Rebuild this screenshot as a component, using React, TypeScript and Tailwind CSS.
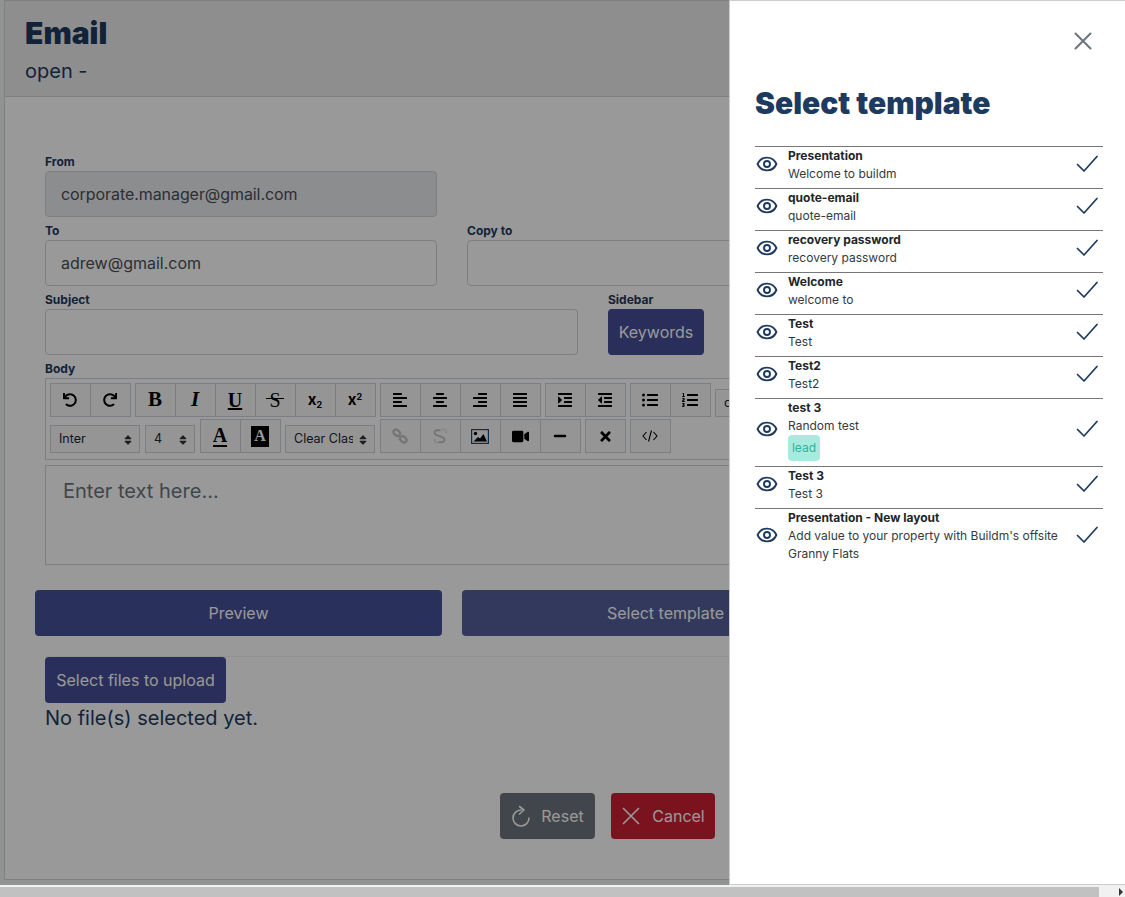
import type { ReactNode } from "react";
import {
  FaUndo,
  FaRedo,
  FaAlignLeft,
  FaAlignCenter,
  FaAlignRight,
  FaAlignJustify,
  FaIndent,
  FaOutdent,
  FaListUl,
  FaListOl,
  FaVideo,
  FaMinus,
  FaTimes,
  FaSort,
} from "react-icons/fa";

const templates = [
  { title: "Presentation", text: "Welcome to buildm" },
  { title: "quote-email", text: "quote-email" },
  { title: "recovery password", text: "recovery password" },
  { title: "Welcome", text: "welcome to" },
  { title: "Test", text: "Test" },
  { title: "Test2", text: "Test2" },
  { title: "test 3", text: "Random test", tag: "lead" },
  { title: "Test 3", text: "Test 3" },
  { title: "Presentation - New layout", text: "Add value to your property with Buildm's offsite Granny Flats" },
];

function Label({ children }: { children: ReactNode }) {
  return <div className="h-[23px] pt-[5px] text-[12px] leading-[18px] font-bold text-[#1e3a5f]">{children}</div>;
}

function ToolBtn({ children }: { children: ReactNode }) {
  return (
    <div className="flex h-[34px] w-[41px] shrink-0 items-center justify-center border border-[#ced4da] bg-[#f8f9fa] -mr-px pr-px text-[16px] text-black">
      {children}
    </div>
  );
}

function Group({ children }: { children: ReactNode }) {
  return <div className="flex shrink-0 pr-px">{children}</div>;
}

function FakeSelect({ label, className }: { label: string; className: string }) {
  return (
    <div className={`mr-px mt-[6px] flex h-[28px] shrink-0 items-center justify-between gap-[4px] border border-[#ced4da] bg-[#f8f9fa] pl-[8px] pr-[5px] pt-px text-[12.5px] text-[#212529] ${className}`}>
      <span className="overflow-hidden whitespace-nowrap">{label}</span>
      <FaSort className="shrink-0 text-[12px] text-[#333]" />
    </div>
  );
}

function EyeIcon() {
  return (
    <svg width="24" height="24" viewBox="0 0 24 24" fill="none" stroke="#1e3a5f" strokeWidth="1.9" strokeLinecap="round" strokeLinejoin="round">
      <path d="M2.600 12C4.400 7.900 8 5.600 12 5.600s7.600 2.300 9.400 6.400c-1.800 4.100-5.400 6.400-9.400 6.400S4.400 16.100 2.600 12Z" />
      <circle cx="12" cy="12" r="3" />
    </svg>
  );
}

function CheckIcon() {
  return (
    <svg width="24" height="24" viewBox="0 0 24 24" fill="none" stroke="#1e3a5f" strokeWidth="1.700" strokeLinecap="round" strokeLinejoin="round">
      <path d="M2.500 12.500 9 19 22 4.500" />
    </svg>
  );
}

function CloseIcon({ size, stroke, width = 2 }: { size: number; stroke: string; width?: number }) {
  return (
    <svg width={size} height={size} viewBox="0 0 24 24" fill="none" stroke={stroke} strokeWidth={width} strokeLinecap="round">
      <path d="M3 3 21 21M21 3 3 21" />
    </svg>
  );
}

function LinkIcon() {
  return (
    <svg width="16" height="16" viewBox="0 0 16 16" fill="none" stroke="#c4c4c4" strokeWidth="2.300">
      <rect x="1.200" y="2.200" width="7" height="5" rx="2.500" transform="rotate(40 4.700 4.700)" />
      <rect x="7.800" y="8.800" width="7" height="5" rx="2.500" transform="rotate(40 11.300 11.300)" />
    </svg>
  );
}

function UnlinkIcon() {
  return (
    <svg width="18" height="18" viewBox="0 0 18 18" fill="none" stroke="#c4c4c4" strokeWidth="1.900" strokeLinecap="round">
      <path d="M9 3.200H6a2.400 2.400 0 0 0-1.200 4.500l7.400 3a2.400 2.400 0 0 1-1.200 4.500H8" />
      <path strokeWidth="0.900" d="M12 1.500v1.500M14.500 2.500l-1 1.200M16 5h-1.500M3 13h1.500M3.500 15.500l1-1.200M6 16.500V15" />
    </svg>
  );
}

function ImageIcon() {
  return (
    <svg width="18" height="15" viewBox="0 0 18 15" fill="none">
      <rect x="0.600" y="0.600" width="16.800" height="13.800" stroke="#0f4c8a" strokeWidth="1.200" />
      <circle cx="4.500" cy="4.500" r="1.700" fill="#000" />
      <path d="M2.500 12.500 7 8l2 1.500 3.500-4.500 3.500 7.500Z" fill="#000" />
    </svg>
  );
}

function Toolbar() {
  return (
    <div className="h-[82px] w-[760px] border border-[#ced4da] pl-[4px] pt-[4px]">
      <div className="flex gap-[4px]">
        <Group>
          <ToolBtn><FaUndo className="text-[14px]" /></ToolBtn>
          <ToolBtn><FaRedo className="text-[14px]" /></ToolBtn>
        </Group>
        <Group>
          <ToolBtn><span className="font-['Liberation_Serif',serif] text-[21px] font-bold">B</span></ToolBtn>
          <ToolBtn><span className="font-['Liberation_Serif',serif] text-[21px] italic font-bold">I</span></ToolBtn>
          <ToolBtn><span className="font-['Liberation_Serif',serif] text-[20px] font-bold underline">U</span></ToolBtn>
          <ToolBtn>
            <span className="relative font-['Liberation_Serif',serif] text-[20px]">
              S
              <span className="absolute -left-[3px] -right-[3px] top-[13px] h-px bg-black" />
            </span>
          </ToolBtn>
          <ToolBtn><span className="text-[15px] font-bold">x<span className="align-[-3px] text-[9px]">2</span></span></ToolBtn>
          <ToolBtn><span className="text-[15px] font-bold">x<span className="align-[5px] text-[9px]">2</span></span></ToolBtn>
        </Group>
        <Group>
          <ToolBtn><FaAlignLeft /></ToolBtn>
          <ToolBtn><FaAlignCenter /></ToolBtn>
          <ToolBtn><FaAlignRight /></ToolBtn>
          <ToolBtn><FaAlignJustify /></ToolBtn>
        </Group>
        <Group>
          <ToolBtn><FaIndent /></ToolBtn>
          <ToolBtn><FaOutdent /></ToolBtn>
        </Group>
        <Group>
          <ToolBtn><FaListUl /></ToolBtn>
          <ToolBtn><FaListOl /></ToolBtn>
        </Group>
        <FakeSelect label="code" className="w-[60px]" />
      </div>
      <div className="mt-[2px] flex h-[34px] gap-[4px]">
        <FakeSelect label="Inter" className="w-[90px]" />
        <FakeSelect label="4" className="w-[50px]" />
        <Group>
          <ToolBtn>
            <span className="border-b-[2px] border-black font-['Liberation_Serif',serif] text-[20px] leading-[20px] font-bold">A</span>
          </ToolBtn>
          <ToolBtn>
            <span className="flex h-[21px] w-[18px] items-center justify-center bg-black font-['Liberation_Serif',serif] text-[16px] font-bold text-white">A</span>
          </ToolBtn>
        </Group>
        <FakeSelect label="Clear Class" className="w-[90px]" />
        <Group>
          <ToolBtn><LinkIcon /></ToolBtn>
          <ToolBtn><UnlinkIcon /></ToolBtn>
          <ToolBtn><ImageIcon /></ToolBtn>
          <ToolBtn><FaVideo className="text-[17px]" /></ToolBtn>
          <ToolBtn><FaMinus className="text-[14px]" /></ToolBtn>
        </Group>
        <Group>
          <ToolBtn><FaTimes className="text-[15px]" /></ToolBtn>
        </Group>
        <Group>
          <ToolBtn>
            <svg width="16" height="16" viewBox="0 0 16 16" fill="none" stroke="#000" strokeWidth="1.100">
              <path d="M4.500 4 1 8l3.500 4M11.500 4 15 8l-3.500 4M9.500 2.500 6.500 13.500" />
            </svg>
          </ToolBtn>
        </Group>
      </div>
    </div>
  );
}

function EmailForm() {
  return (
    <div className="ml-[4px] h-[880px] w-[1400px] border border-[#d4d4d4] bg-white text-[#1e3a5f]">
      <div className="h-[96px] border-b border-[#d4d4d4] bg-[#ededed] pl-[20px]">
        <h1 className="pt-[13px] text-[30px] leading-[38px] font-black">Email</h1>
        <p className="mt-[6px] text-[20px] leading-[26px]">open -</p>
      </div>

      <div className="pl-[40px] pt-[51px]">
        <Label>From</Label>
        <div className="flex h-[46px] w-[392px] items-center rounded-[4px] border border-[#ced4da] bg-[#e9ecef] px-[15px] text-[16px] tracking-[-0.07px] text-[#495057]">
          corporate.manager@gmail.com
        </div>

        <div className="flex gap-[30px]">
          <div>
            <Label>To</Label>
            <div className="flex h-[46px] w-[392px] items-center rounded-[4px] border border-[#ced4da] px-[15px] text-[16px] text-[#495057]">
              adrew@gmail.com
            </div>
          </div>
          <div>
            <Label>Copy to</Label>
            <div className="h-[46px] w-[392px] rounded-[4px] border border-[#ced4da]" />
          </div>
        </div>

        <div className="flex gap-[30px]">
          <div>
            <Label>Subject</Label>
            <div className="h-[46px] w-[533px] rounded-[4px] border border-[#ced4da]" />
          </div>
          <div>
            <Label>Sidebar</Label>
            <div className="flex h-[46px] w-[96px] items-center justify-center rounded-[4px] bg-[#454e98] text-[16px] text-white">Keywords</div>
          </div>
        </div>

        <Label>Body</Label>
        <Toolbar />
        <div className="mt-[5px] h-[100px] w-[760px] border border-[#ced4da] px-[17px] py-[12px] text-[20px] leading-[26px] text-[#6c757d]">
          Enter text here...
        </div>

        <div className="-ml-[10px] mt-[25px] flex gap-[20px]">
          <div className="flex h-[46px] w-[407px] items-center justify-center rounded-[4px] bg-[#465099] text-[16px] text-white">Preview</div>
          <div className="flex h-[46px] w-[407px] items-center justify-center rounded-[4px] bg-[#555f9a] text-[16px] text-white">Select template</div>
        </div>

        <div className="mt-[20px] border-t border-[#f2f2f2]">
          <div className="flex h-[46px] w-[181px] items-center justify-center rounded-[4px] bg-[#454e98] text-[16px] text-white">
            Select files to upload
          </div>
          <p className="text-[20px] leading-[30px]">No file(s) selected yet.</p>
        </div>

        <div className="mt-[60px] flex gap-[16px] pl-[455px]">
          <div className="flex h-[46px] w-[95px] items-center justify-center gap-[10px] rounded-[4px] bg-[#6c757d] text-[16px] text-white">
            <svg width="20" height="22" viewBox="0 0 20 22" fill="none" stroke="#fff" strokeWidth="1.600" strokeLinecap="round" strokeLinejoin="round">
              <path d="M10 5A8 8 0 1 0 18 13" />
              <path d="M8.500 1.500 13 5 8.500 9" />
            </svg>
            Reset
          </div>
          <div className="flex h-[46px] w-[104px] items-center justify-center gap-[11px] rounded-[4px] bg-[#cb2132] text-[16px] text-white">
            <CloseIcon size={20} stroke="#fff" />
            Cancel
          </div>
        </div>
      </div>
    </div>
  );
}

function TemplatePanel() {
  return (
    <aside className="absolute right-0 top-0 h-[885px] w-[396px] border-y border-l border-[#cccccc] bg-white pl-[25px] pr-[22px]">
      <div className="flex justify-end pr-[10px] pt-[30px]">
        <CloseIcon size={20} stroke="#6c757d" width={2.4} />
      </div>
      <h2 className="mt-[33px] text-[30px] leading-[38px] font-black text-[#1e3a5f]">Select template</h2>
      <ul className="mt-[24px]">
        {templates.map((t) => (
          <li key={t.title + t.text} className="flex items-center border-t border-[#777777] pb-[5px]">
            <div className="mb-[3px] mr-[9px] w-[24px] shrink-0"><EyeIcon /></div>
            <div className="min-w-0 flex-1 pr-[10px] text-[12px] leading-[18px] text-[#212529]">
              <div className="font-bold">{t.title}</div>
              <div className="text-[#343a40]">{t.text}</div>
              {t.tag && (
                <div className="flex h-[26px] w-[32px] items-center justify-center rounded-[4px] bg-[#a9eadf] text-[12px] text-[#2ab59c]">
                  {t.tag}
                </div>
              )}
            </div>
            <div className="mb-[3px] mr-[4px] w-[24px] shrink-0"><CheckIcon /></div>
          </li>
        ))}
      </ul>
    </aside>
  );
}

export default function App() {
  return (
    <div className="flex h-[897px] w-[1125px] flex-col overflow-hidden bg-white font-['Inter',sans-serif]">
      <div className="relative h-[885px] shrink-0 overflow-hidden bg-[#eef5f3]">
        <EmailForm />
        {/* backdrop behind the drawer */}
        <div className="absolute inset-0 bg-black/40" />
        <TemplatePanel />
      </div>
      {/* page scrollbar */}
      <div className="flex h-[12px] shrink-0 bg-[#f1f1f1] pt-[2px]">
        <div className="h-full w-[1099px] bg-[#c1c1c1]" />
        <div className="flex flex-1 items-center justify-end pr-[2px]">
          <div className="h-0 w-0 border-y-[4px] border-l-[4px] border-y-transparent border-l-[#333]" />
        </div>
      </div>
    </div>
  );
}
